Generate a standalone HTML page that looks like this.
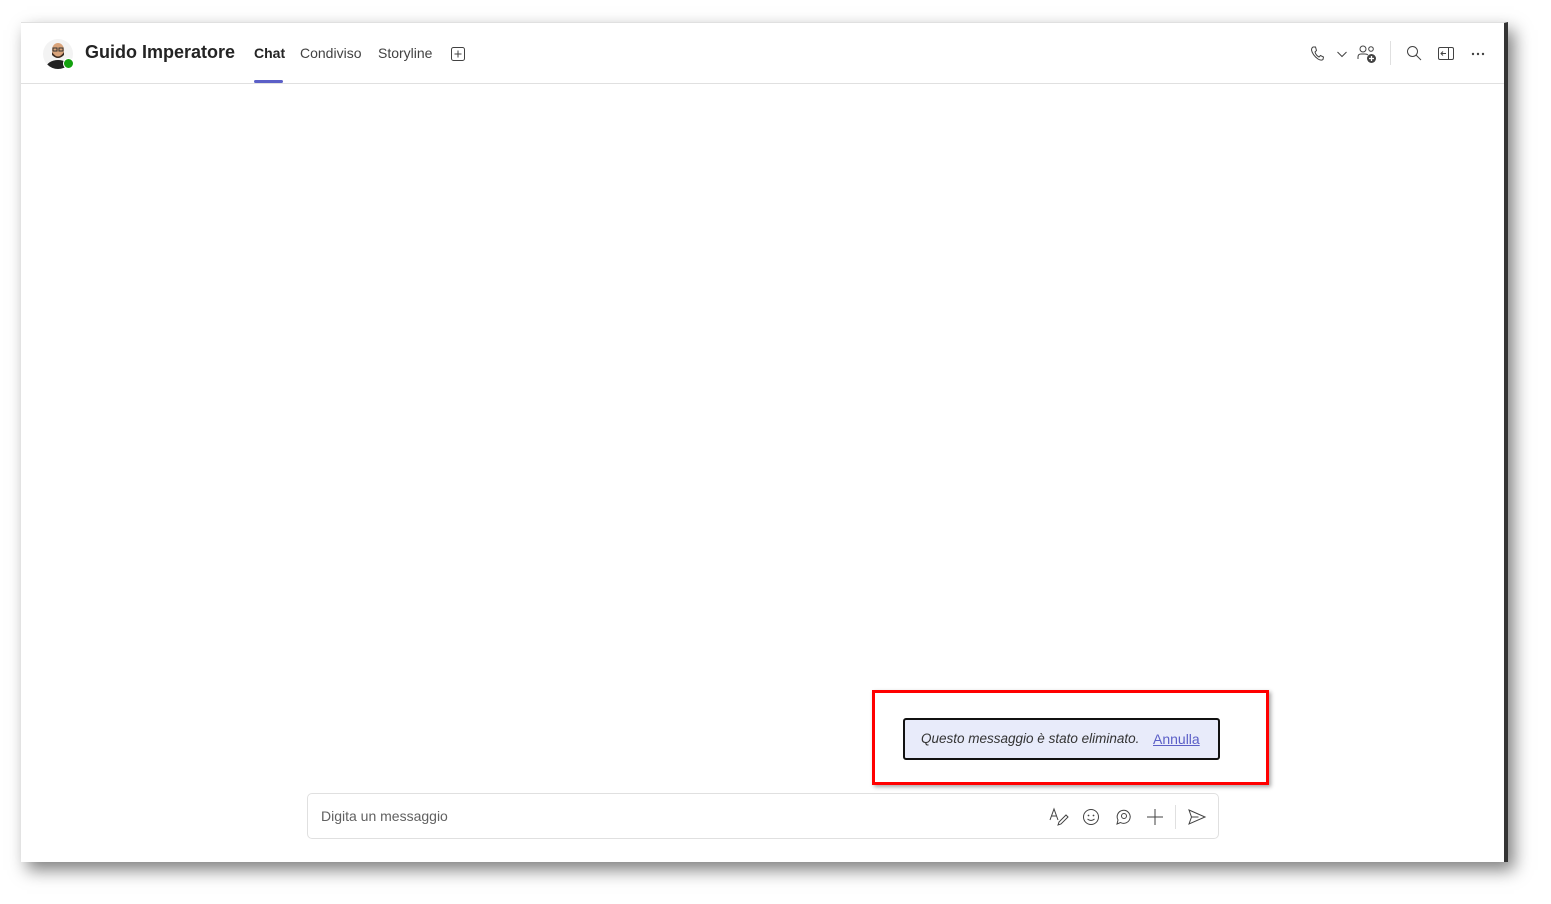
<!DOCTYPE html>
<html><head><meta charset="utf-8"><style>
*{margin:0;padding:0;box-sizing:border-box}
body{width:1551px;height:904px;background:#fff;position:relative;overflow:hidden;font-family:"Segoe UI","Liberation Sans",sans-serif;color:#242424}
.win{position:absolute;left:21px;top:22px;width:1487px;height:840px;background:#fff;border-top:1px solid #e0e0e0;border-right:4px solid #333;box-shadow:6px 8px 16px rgba(0,0,0,.5)}
.hdr{position:absolute;left:0;top:0;width:1483px;height:61px;border-bottom:1px solid #e0e0e0}
.av{position:absolute;left:22px;top:16px;width:30px;height:30px;border-radius:50%;background:#f3f3f3;overflow:hidden}
.badge{position:absolute;left:42px;top:35px;width:11px;height:11px;border-radius:50%;background:#13a10e;border:1.5px solid #fff}
.name{position:absolute;left:64px;top:19px;font-size:18px;font-weight:bold;color:#242424}
.tab{position:absolute;top:22px;font-size:14px;color:#424242}
.ul{position:absolute;left:233px;top:57px;width:29px;height:3px;background:#5b5fc7;border-radius:2px}
.icon{position:absolute}
.redbox{position:absolute;left:872px;top:690px;width:397px;height:95px;border:3px solid #f00;box-shadow:2px 2px 4px rgba(0,0,0,.35)}
.toast{position:absolute;left:903px;top:718px;width:317px;height:42px;background:#e8ebfa;border:2px solid #111;border-radius:3px;font-size:13.5px}
.toast i{position:absolute;left:16px;top:11px;color:#333}
.toast a{position:absolute;left:248px;top:11px;color:#5b5fc7;text-decoration:underline;font-size:14px}
.input{position:absolute;left:307px;top:793px;width:912px;height:46px;border:1px solid #e0e0e0;border-radius:5px;background:#fff}
.input span{position:absolute;left:13px;top:14px;font-size:14px;color:#616161}
</style></head><body>
<div class="win">
 <div class="hdr">
  <div class="av"><svg width="30" height="30" viewBox="0 0 30 30"><ellipse cx="15" cy="29" rx="12" ry="8" fill="#222"/><ellipse cx="15" cy="11" rx="6" ry="7" fill="#d9a37a"/><path d="M9 13 Q15 22 21 13 L21 16 Q15 22 9 16Z" fill="#3a2a20"/><rect x="10" y="9" width="4" height="3" fill="none" stroke="#333"/><rect x="16" y="9" width="4" height="3" fill="none" stroke="#333"/></svg></div>
  <div class="badge"></div>
  <div class="name">Guido Imperatore</div>
  <div class="tab" style="left:233px;font-weight:600;color:#242424">Chat</div>
  <div class="tab" style="left:279px">Condiviso</div>
  <div class="tab" style="left:357px">Storyline</div>
  <svg class="icon" style="left:429px;top:23px" width="16" height="16" viewBox="0 0 16 16"><rect x="1.5" y="1.5" width="13" height="13" rx="2" fill="none" stroke="#424242"/><path d="M8 4.5v7M4.5 8h7" stroke="#424242"/></svg>
  <div class="ul"></div>
  <svg class="icon" style="left:1288px;top:22px" width="16" height="18" viewBox="0 0 16 18"><path d="M4 2 L6.5 2 L7.5 5.5 L6 7 Q7 10.5 10 12 L11.5 10.5 L14.5 12 L14 14.5 Q12 16 9 14 Q3.5 10 2.5 5 Q2.5 3 4 2Z" fill="none" stroke="#424242"/></svg>
  <svg class="icon" style="left:1315px;top:26px" width="12" height="10"><path d="M1.5 3l4.5 4.5 4.5-4.5" fill="none" stroke="#424242"/></svg>
  <svg class="icon" style="left:1336px;top:21px" width="20" height="20" viewBox="0 0 20 20"><circle cx="6" cy="5" r="3" fill="none" stroke="#424242"/><path d="M1 15v-2q0-3 3-3h4q2 0 3 1" fill="none" stroke="#424242"/><circle cx="14" cy="5" r="2.3" fill="none" stroke="#424242"/><circle cx="14.5" cy="14.5" r="4.5" fill="#424242"/><path d="M14.5 12v5M12 14.5h5" stroke="#fff" stroke-width="1.3"/></svg>
  <div style="position:absolute;left:1369px;top:18px;width:1px;height:24px;background:#e0e0e0"></div>
  <svg class="icon" style="left:1385px;top:22px" width="16" height="16"><circle cx="6.5" cy="6.5" r="5" fill="none" stroke="#424242"/><path d="M10 10l5 5" stroke="#424242"/></svg>
  <svg class="icon" style="left:1416px;top:23px" width="18" height="15"><rect x="1.5" y="1.5" width="15" height="12" rx="1.5" fill="none" stroke="#424242"/><path d="M11.5 1.5v12M4 7.5h5M6 5.5l-2 2 2 2" fill="none" stroke="#424242"/></svg>
  <svg class="icon" style="left:1449px;top:28px" width="16" height="6"><circle cx="3" cy="3" r="1.2" fill="#424242"/><circle cx="8" cy="3" r="1.2" fill="#424242"/><circle cx="13" cy="3" r="1.2" fill="#424242"/></svg>
 </div>
</div>
<div class="redbox"></div>
<div class="toast"><i>Questo messaggio è stato eliminato.</i><a>Annulla</a></div>
<div class="input"><span>Digita un messaggio</span>
 <svg class="icon" style="left:741px;top:13px" width="20" height="20"><path d="M1 13l4-11 4 11M2.5 9h5" fill="none" stroke="#424242"/><path d="M9 18l1-3 7-7 2 2-7 7z" fill="none" stroke="#424242"/></svg>
 <svg class="icon" style="left:774px;top:14px" width="18" height="18"><circle cx="9" cy="9" r="7.5" fill="none" stroke="#424242"/><circle cx="6.5" cy="7.5" r=".9" fill="#424242"/><circle cx="11.5" cy="7.5" r=".9" fill="#424242"/><path d="M5.5 11q3.5 3 7 0" fill="none" stroke="#424242"/></svg>
 <svg class="icon" style="left:806px;top:14px" width="18" height="18"><path d="M3 16l1-4a6.5 6.5 0 1 1 2.5 2.5z" fill="none" stroke="#424242"/><circle cx="10" cy="8" r="2.5" fill="none" stroke="#424242"/></svg>
 <svg class="icon" style="left:838px;top:14px" width="18" height="18"><path d="M9 1v16M1 9h16" stroke="#424242"/></svg>
 <div style="position:absolute;left:867px;top:11px;width:1px;height:24px;background:#e0e0e0"></div>
 <svg class="icon" style="left:879px;top:14px" width="20" height="18"><path d="M2 2l16 7-16 7 2.5-7z M4.5 9h7" fill="none" stroke="#424242"/></svg>
</div>
</body></html>
